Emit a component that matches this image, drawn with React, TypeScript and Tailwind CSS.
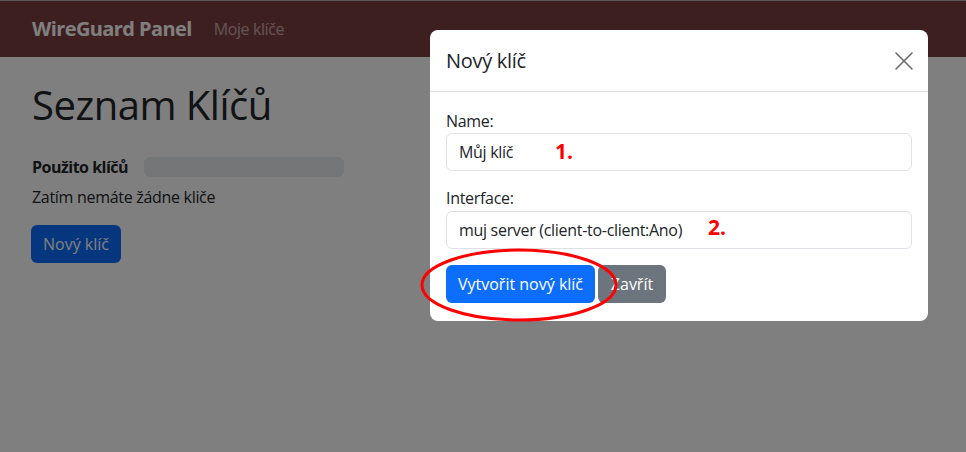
import { X } from "lucide-react";

export default function App() {
    return (
        <div className="relative h-[452px] w-[966px] overflow-hidden bg-white font-['Open_Sans',sans-serif] text-[16px] text-[#212529]">
            {/* Navbar */}
            <div className="border-t border-[#b0b0b0]">
                <nav className="flex h-[56px] items-center bg-[#7c3e3e] px-8">
                    <span className="text-[20px] font-bold tracking-[-0.6px] text-white">WireGuard Panel</span>
                    <span className="ml-[22px] text-[16px] tracking-[-0.4px] text-white/55">Moje klíče</span>
                </nav>
            </div>

            {/* Page */}
            <div className="px-8 pt-[24px]">
                <h1 className="text-[40px] leading-[48px] font-normal tracking-[-0.5px]">Seznam Klíčů</h1>
                <div className="mt-[26px] flex items-center">
                    <span className="font-bold tracking-[-0.5px]">Použito klíčů</span>
                    <div className="ml-[16px] h-[20px] w-[200px] rounded-[6px] bg-[#e9ecef]" />
                </div>
                <p className="mt-[6px] tracking-[-0.3px]">Zatím nemáte žádne kliče</p>
                <button className="mt-[16px] -ml-px h-[38px] rounded-[6px] bg-[#0d6efd] px-[12px] text-white">
                    Nový klíč
                </button>
            </div>

            {/* Backdrop */}
            <div className="absolute inset-0 bg-black/50" />

            {/* Modal */}
            <div className="absolute left-[430px] top-[30px] w-[498px] rounded-[8px] bg-white">
                <div className="flex h-[62px] items-center justify-between border-b border-[#dee2e6] px-4">
                    <h5 className="text-[20px] font-medium tracking-[-0.3px]">Nový klíč</h5>
                    <X size={32} strokeWidth={1.2} className="-mr-2 text-[#6c6c6c]" />
                </div>
                <div className="px-4 pt-[17px] pb-[18px]">
                    <label className="block leading-[24px] tracking-[-0.3px]">Name:</label>
                    <div className="flex h-[38px] items-center rounded-[6px] border border-[#dee2e6] px-[12px] tracking-[-0.3px]">
                        Můj klíč
                    </div>
                    <label className="mt-[15px] block leading-[24px] tracking-[-0.3px]">Interface:</label>
                    <div className="mt-[1px] flex h-[38px] items-center rounded-[6px] border border-[#dee2e6] px-[12px] tracking-[-0.3px]">
                        muj server (client-to-client:Ano)
                    </div>
                    <div className="mt-[16px] flex gap-[3px]">
                        <button className="h-[38px] w-[149px] rounded-[6px] bg-[#0d6efd] text-white">Vytvořit nový klíč</button>
                        <button className="h-[38px] w-[68px] rounded-[6px] bg-[#6c757d] text-white">Zavřít</button>
                    </div>
                </div>
            </div>

            {/* Annotations */}
            <span className="absolute left-[555px] top-[136px] text-[21px] font-bold text-[#ff0000]">1.</span>
            <span className="absolute left-[708px] top-[212px] text-[21px] font-bold text-[#ff0000]">2.</span>
            <svg className="absolute left-0 top-0" width="966" height="452">
                <ellipse cx="519" cy="285" rx="97" ry="35" fill="none" stroke="#ff0000" strokeWidth="3" />
            </svg>
        </div>
    );
}
